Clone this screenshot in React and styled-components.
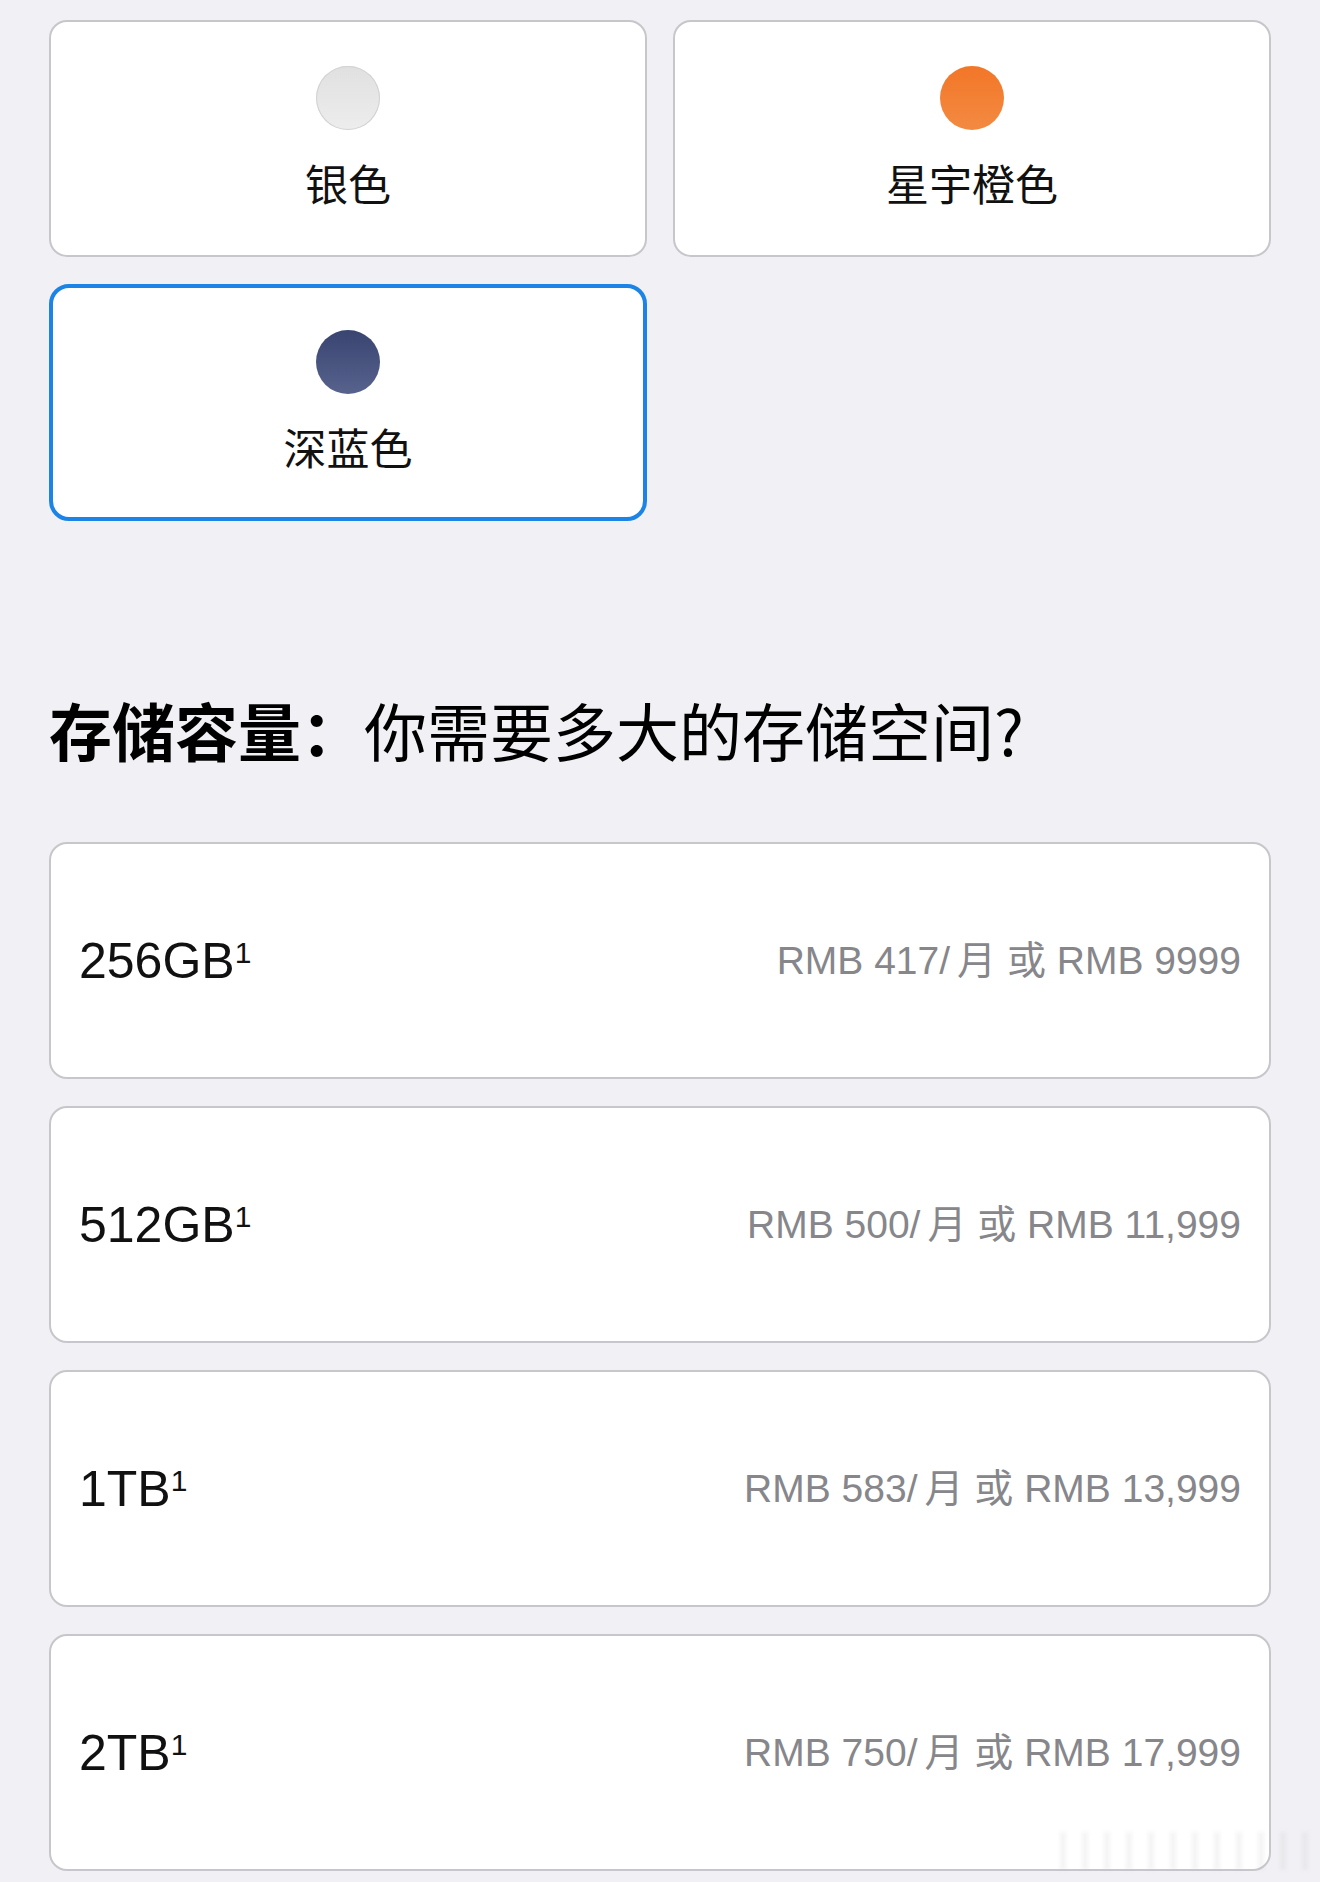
import React from "react";
import styled, { createGlobalStyle } from "styled-components";

const Global = createGlobalStyle`
  html, body { margin: 0; padding: 0; background: #f1f1f5; }
  body { font-family: "Liberation Sans", "Noto Sans CJK SC", sans-serif; color: #1d1d1f; }
`;

const Page = styled.div`
  position: relative;
  width: 1320px;
  height: 1882px;
  overflow: hidden;
  box-sizing: border-box;
  padding: 20px 49px 0;
  background: #f1f1f5;
`;

const ColorGrid = styled.div`
  display: grid;
  grid-template-columns: 1fr 1fr;
  column-gap: 26px;
  row-gap: 27px;
`;

const ColorCard = styled.div`
  box-sizing: border-box;
  height: 237px;
  background: #fff;
  border: ${(p) => (p.$selected ? "4px solid #1b84e6" : "2px solid #c6c6cb")};
  border-radius: ${(p) => (p.$selected ? "20px" : "18px")};
  display: flex;
  flex-direction: column;
  align-items: center;
  justify-content: center;
  gap: 26px;
`;

const Swatch = styled.div`
  width: 64px;
  height: 64px;
  border-radius: 50%;
  background: ${(p) => p.$bg};
  box-shadow: ${(p) => p.$ring || "none"};
`;

const ColorName = styled.div`
  font-family: "Noto Sans CJK SC", sans-serif;
  font-size: 43px;
  line-height: 52px;
  margin-bottom: 3px;
  color: #111;
`;

const Heading = styled.h2`
  margin: 170px 0 0;
  font-family: "Noto Sans CJK SC", sans-serif;
  font-size: 63px;
  line-height: 76px;
  font-weight: 400;
  color: #000;
  white-space: nowrap;
`;

const HeadBold = styled.span`
  font-weight: 700;
`;

const Options = styled.div`
  margin-top: 75px;
  display: flex;
  flex-direction: column;
  gap: 27px;
`;

const OptionRow = styled.div`
  box-sizing: border-box;
  height: 237px;
  background: #fff;
  border: 2px solid #c6c6cb;
  border-radius: 18px;
  display: flex;
  align-items: center;
  justify-content: space-between;
  padding: 0 28px 0 28px;
`;

const Capacity = styled.div`
  font-size: 50px;
  line-height: 60px;
  color: #111;
  white-space: nowrap;
`;

const Sup = styled.span`
  font-size: 30px;
  line-height: 0;
  vertical-align: 15px;
`;

const Price = styled.div`
  font-size: 39px;
  line-height: 50px;
  color: #86868b;
  white-space: nowrap;
`;

const Slash = styled.span`
  margin-right: 7px;
`;

const Watermark = styled.div`
  position: absolute;
  left: 1060px;
  top: 1832px;
  width: 250px;
  height: 38px;
  opacity: 0.3;
  filter: blur(2px);
  background: repeating-linear-gradient(
    90deg,
    rgba(180, 180, 185, 0.5) 0 6px,
    transparent 6px 22px
  );
  pointer-events: none;
`;

const colors = [
  {
    name: "银色",
    bg: "linear-gradient(180deg, #e0e0e0, #ededed)",
    ring: "inset 0 0 0 1px #d2d2d2",
  },
  {
    name: "星宇橙色",
    bg: "linear-gradient(180deg, #f27628, #f38a42)",
  },
  {
    name: "深蓝色",
    bg: "linear-gradient(180deg, #394570, #57628d)",
    selected: true,
  },
];

const options = [
  { cap: "256GB", month: "417", total: "9999" },
  { cap: "512GB", month: "500", total: "11,999" },
  { cap: "1TB", month: "583", total: "13,999" },
  { cap: "2TB", month: "750", total: "17,999" },
];

export default function App() {
  return (
    <>
      <Global />
      <Page>
        <ColorGrid>
          {colors.map((c) => (
            <ColorCard key={c.name} $selected={c.selected}>
              <Swatch $bg={c.bg} $ring={c.ring} />
              <ColorName>{c.name}</ColorName>
            </ColorCard>
          ))}
        </ColorGrid>
        <Heading>
          <HeadBold>存储容量：</HeadBold>你需要多大的存储空间?
        </Heading>
        <Options>
          {options.map((o) => (
            <OptionRow key={o.cap}>
              <Capacity>
                {o.cap}
                <Sup>1</Sup>
              </Capacity>
              <Price>
                RMB {o.month}<Slash>/</Slash>月 或 RMB {o.total}
              </Price>
            </OptionRow>
          ))}
        </Options>
        <Watermark />
      </Page>
    </>
  );
}
